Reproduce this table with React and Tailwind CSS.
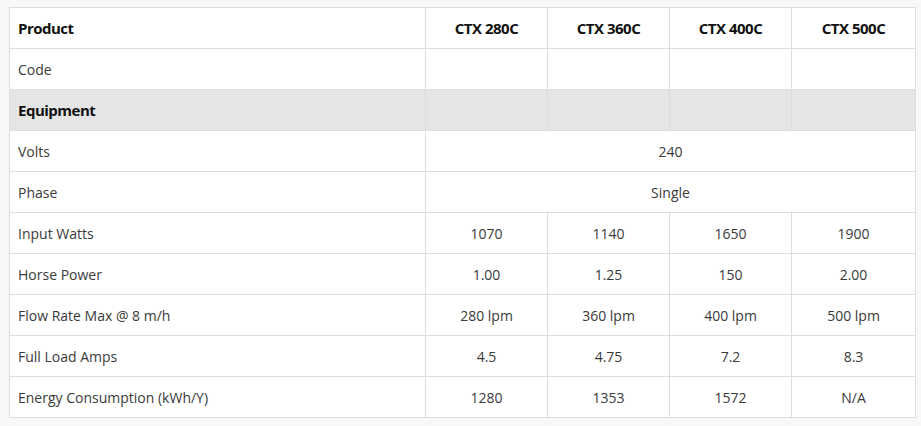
import React from "react";

const models = ["CTX 280C", "CTX 360C", "CTX 400C", "CTX 500C"];
const rows = [
  { label: "Input Watts", vals: ["1070", "1140", "1650", "1900"] },
  { label: "Horse Power", vals: ["1.00", "1.25", "150", "2.00"] },
  { label: "Flow Rate Max @ 8 m/h", vals: ["280 lpm", "360 lpm", "400 lpm", "500 lpm"] },
  { label: "Full Load Amps", vals: ["4.5", "4.75", "7.2", "8.3"] },
  { label: "Energy Consumption (kWh/Y)", vals: ["1280", "1353", "1572", "N/A"] },
];

const td = "border border-[#dddddd] h-[41px] p-0 align-middle";
const hd = "font-bold text-[15px] tracking-[-0.5px] text-[#111111]";

export default function App() {
  return (
    <div className="min-h-[426px] w-[921px] bg-[#f8f8f8] pt-[7px] pl-[9px] text-[14px] text-[#3a3a3a]" style={{ fontFamily: '"Open Sans", "Noto Sans", sans-serif' }}>
      <table className="border-collapse bg-white w-[906px] table-fixed">
        <colgroup>
          <col className="w-[416px]" />
          <col className="w-[122px]" />
          <col className="w-[122px]" />
          <col className="w-[122px]" />
          <col className="w-[124px]" />
        </colgroup>
        <tbody>
          <tr>
            <td className={`${td} pl-[8px] ${hd}`}>Product</td>
            {models.map((m) => (
              <td key={m} className={`${td} text-center ${hd}`}>{m}</td>
            ))}
          </tr>
          <tr>
            <td className={`${td} pl-[8px]`}>Code</td>
            {models.map((m) => (
              <td key={m} className={td}></td>
            ))}
          </tr>
          <tr className="bg-[#e5e5e5]">
            <td className={`${td} pl-[8px] ${hd}`}>Equipment</td>
            {models.map((m) => (
              <td key={m} className={td}></td>
            ))}
          </tr>
          <tr>
            <td className={`${td} pl-[8px]`}>Volts</td>
            <td colSpan={4} className={`${td} text-center`}>240</td>
          </tr>
          <tr>
            <td className={`${td} pl-[8px]`}>Phase</td>
            <td colSpan={4} className={`${td} text-center`}>Single</td>
          </tr>
          {rows.map((r) => (
            <tr key={r.label}>
              <td className={`${td} pl-[8px]`}>{r.label}</td>
              {r.vals.map((v, i) => (
                <td key={i} className={`${td} text-center`}>{v}</td>
              ))}
            </tr>
          ))}
        </tbody>
      </table>
    </div>
  );
}
